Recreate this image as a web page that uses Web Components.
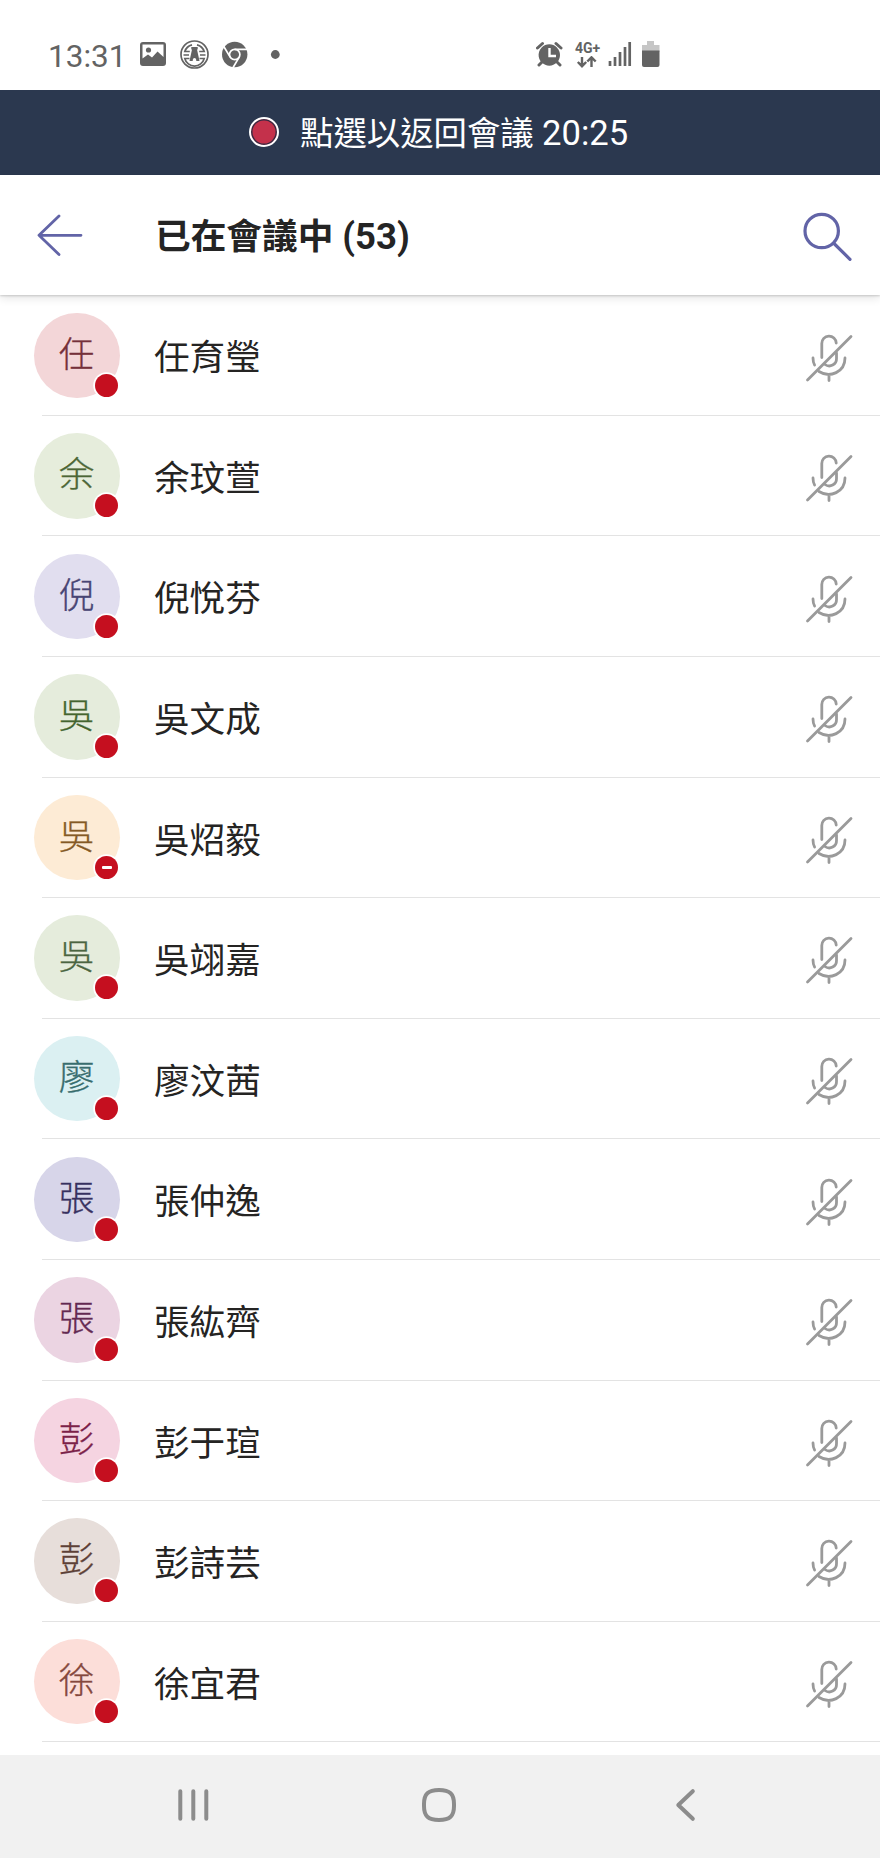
<!DOCTYPE html>
<html lang="zh-Hant">
<head>
<meta charset="utf-8">
<title>已在會議中</title>
<style>
html,body{margin:0;padding:0;background:#fff}
body{width:880px;font-family:Roboto,"Noto Sans CJK TC",sans-serif;color:#252423}
</style>
</head>
<body>
<meeting-screen></meeting-screen>
<script>
const define = (name, html, setup) => customElements.define(name, class extends HTMLElement {
  constructor() {
    super();
    this.attachShadow({ mode: 'open' }).innerHTML = html;
  }
  connectedCallback() { if (setup) setup(this, this.shadowRoot); }
});

define('status-bar', `
<style>
:host{display:flex;height:90px;box-sizing:border-box;padding:20px 0 0 48px;align-items:flex-start;color:#636363}
svg{display:block;flex:none}
.time{width:92px;font-size:31.500px;line-height:73px;height:69px;white-space:nowrap}
.net{width:29px;margin-left:12px;padding-top:20px}
.net span{display:block;font-size:14px;line-height:16px;height:16px;font-weight:700;white-space:nowrap}
</style>
<div class="time">13:31</div>
<svg width="27" height="69" viewBox="140 20 27 69"><path fill="#636363" fill-rule="evenodd" d="M143 42h20q3 0 3 3v18q0 3-3 3h-20q-3 0-3-3V45q0-3 3-3zm-.5 2.500v14l5.500-4 4 3 5.500-6 6 5.500V44.500z"/><circle cx="148.500" cy="50" r="2.600" fill="#636363"/></svg>
<svg width="55" height="69" viewBox="167 20 55 69"><g fill="none" stroke="#636363" stroke-width="1.700"><circle cx="194.500" cy="54.500" r="13.500"/><path d="M192 44.800a10 10 0 0 0-7.200 6.700h5M197 44.800a10 10 0 0 1 7.200 6.700h-5M183.500 55h5.500M205.500 55h-5.500M189.500 58.500h-4.700a10 10 0 0 0 19.400 0h-4.700"/></g><path fill="#636363" d="M191.300 47h6.400v2.500h-.7l2.500 11.500h-3.200q0-3-1.800-3t-1.800 3h-3.200l2.500-11.500h-.7z"/></svg>
<svg width="46" height="69" viewBox="222 20 46 69"><circle cx="234.700" cy="54.500" r="12.700" fill="#636363"/><g stroke="#fff" stroke-width="1.700" fill="none"><circle cx="234.700" cy="54.500" r="5.200"/><path d="M234.700 49.300H247M230.200 57.100L223.500 46M239.200 57.100L232.500 68.500"/></g></svg>
<svg width="268" height="69" viewBox="268 20 268 69"><circle cx="275.300" cy="54.500" r="4.400" fill="#636363"/></svg>
<svg width="27" height="69" viewBox="536 20 27 69"><circle cx="549.300" cy="55" r="10.700" fill="#636363"/><path d="M537.500 48l5-4.500M561 48l-5-4.500M543 61l-4 4M556 61l4 4" stroke="#636363" stroke-width="3" stroke-linecap="round"/><path d="M549.500 48v8h6.500" fill="none" stroke="#fff" stroke-width="2.400"/></svg>
<div class="net"><span>4G+</span><svg width="25" height="13" viewBox="575 55 25 13"><path d="M582 56v9M577.800 61l4.200 4.200 4.200-4.200M591.500 66v-9M587.300 60.500l4.200-4.200 4.200 4.200" fill="none" stroke="#636363" stroke-width="2.400"/></svg></div>
<svg width="38" height="69" viewBox="604 20 38 69"><path d="M610 61v5M615 57v9M620 52v14M625 47v19M629.700 42v24" stroke="#636363" stroke-width="2.700"/></svg>
<svg width="18" height="69" viewBox="642 20 18 69"><path fill="#c6c6c6" d="M647 41h7v4h5.500v7H642v-7h5z"/><path fill="#636363" d="M642 50.500h17.500V65q0 2-2 2H644q-2 0-2-2z"/></svg>
`);

define('call-banner', `
<style>
:host{display:flex;height:85px;background:#2b384f;color:#fff;align-items:center;justify-content:flex-start;padding:0 0 1px 249px;box-sizing:border-box}
i{display:block;box-sizing:border-box;width:30px;height:30px;border:2.500px solid #fff;border-radius:50%;background:#c4314b;margin-right:21px;box-shadow:inset 0 0 0 1.500px #3a2a42}
span{font-size:33.400px;line-height:50px;height:50px;white-space:nowrap;margin-top:2px}
::slotted(b){font-size:34.600px;font-weight:400}
</style><i></i><span><slot></slot></span>`);

define('title-bar', `
<style>
:host{display:flex;height:120px;align-items:center;box-sizing:border-box;background:#fff;box-shadow:0 1px 2px #0000002b,0 3px 9px #0000001c;position:relative;z-index:1}
svg{display:block;flex:none}
h1{margin:0;flex:1;font-size:35.700px;font-weight:700;line-height:54px;height:54px;padding-top:4px;color:#242424;white-space:nowrap}
::slotted(b){font-size:36.500px;font-weight:700}
</style>
<svg width="155" height="120" viewBox="0 175 155 120"><path d="M81 235.300H39M59 216L39 235.300 59 254.500" fill="none" stroke="#6264a7" stroke-width="2.800" stroke-linecap="round" stroke-linejoin="round"/></svg>
<h1><slot></slot></h1>
<svg width="80" height="120" viewBox="800 175 80 120"><g fill="none" stroke="#6264a7" stroke-width="3.200" stroke-linecap="round"><circle cx="821.700" cy="231" r="16.700"/><path d="M834 243.500l16 15.800"/></g></svg>`);

define('mic-off', `
<style>:host{display:block;width:75px;height:50px}svg{display:block}</style>
<svg width="75" height="50" viewBox="805 331 75 50"><g fill="none" stroke="#9a9a9a" stroke-width="2.800" stroke-linecap="round"><path d="M807.500 379L851 335.500"/><path d="M821.800 356.500V342.500a7.200 7.200 0 0 1 14.400-.5M836.500 352v5.500a7.200 7.200 0 0 1-11.500 6"/><path d="M813 357q0 4.500 1.600 7M845 357c0 14-15 20.500-26 13.500M829 374.500v5"/></g></svg>`);

define('presence-avatar', `
<style>
:host{display:block;position:relative;width:85.500px;height:85.500px;border-radius:50%;background:var(--bg);color:var(--fg)}
.c{font-weight:300;-webkit-text-stroke:.35px;font-size:35.600px;line-height:84px;text-align:center;margin-left:-1px}
.p{position:absolute;left:61px;top:61px;width:23px;height:23px;border-radius:50%;background:#c50f1f;box-shadow:0 0 0 1.800px #fff;display:flex;align-items:center;justify-content:center}
:host([dnd]) .p::after{content:"";width:10px;height:3px;border-radius:1px;background:#fff}
</style><div class="c"><slot></slot></div><div class="p"></div>`);

define('participant-row', `
<style>
:host{display:flex;height:120.580px;box-sizing:border-box;padding:17px 0 0 34.300px;align-items:flex-start;background:linear-gradient(#e3e3e3,#e3e3e3) right bottom/838px 1.200px no-repeat}
.n{flex:1;margin-left:34.200px;font-size:35.600px;line-height:52px;padding-top:19.800px;white-space:nowrap;color:#252423}
mic-off{margin-top:19px}
</style><presence-avatar></presence-avatar><div class="n"><slot></slot></div><mic-off></mic-off>`,
(el, root) => {
  const a = root.querySelector('presence-avatar');
  a.textContent = el.textContent.trim()[0];
  a.style.setProperty('--bg', el.getAttribute('bg'));
  a.style.setProperty('--fg', el.getAttribute('fg'));
  a.toggleAttribute('dnd', el.hasAttribute('dnd'));
});

define('nav-bar', `
<style>
:host{display:flex;height:103px;background:#f1f1f1;align-items:flex-start;justify-content:space-between;padding:32px 183px 0 176px;box-sizing:border-box}
svg{display:block}
g{fill:none;stroke:#8c8c8c;stroke-width:4;stroke-linecap:round;stroke-linejoin:round}
</style>
<svg width="34" height="36" viewBox="176 1787 34 36"><g><path d="M180.300 1791.200v27.600M193.300 1791.200v27.600M206.300 1791.200v27.600"/></g></svg>
<svg width="36" height="36" viewBox="421 1787 36 36" style="margin-left:-7.500px"><g><path d="M439 1790c11 0 15 4 15 14v2c0 10-4 14-15 14s-15-4-15-14v-2c0-10 4-14 15-14z"/></g></svg>
<svg width="22" height="36" viewBox="675 1787 22 36"><g><path d="M692.800 1791.200l-14.500 13.800 14.500 13.800"/></g></svg>`);

define('meeting-screen', `
<style>
:host{display:flex;flex-direction:column;width:880px;height:1858px;background:#fff;overflow:hidden}
main{height:1460px;box-sizing:border-box;padding-top:.5px}
</style>
<status-bar></status-bar>
<call-banner>點選以返回會議 <b>20:25</b></call-banner>
<title-bar>已在會議中 <b>(53)</b></title-bar>
<main>
<participant-row bg="#f3d6d8" fg="#75303a">任育瑩</participant-row>
<participant-row bg="#e6eddc" fg="#4c6636">余玟萱</participant-row>
<participant-row bg="#e1deef" fg="#484574">倪悅芬</participant-row>
<participant-row bg="#e5ecdc" fg="#44652f">吳文成</participant-row>
<participant-row bg="#fdebd5" fg="#855a25" dnd>吳炤毅</participant-row>
<participant-row bg="#e5ecdc" fg="#4b6541">吳翊嘉</participant-row>
<participant-row bg="#dbf0f2" fg="#386d6e">廖汶茜</participant-row>
<participant-row bg="#d7d5e9" fg="#37315f">張仲逸</participant-row>
<participant-row bg="#ebd4e2" fg="#632951">張紘齊</participant-row>
<participant-row bg="#f5d4e1" fg="#7b2148">彭于瑄</participant-row>
<participant-row bg="#e7deda" fg="#5d4036">彭詩芸</participant-row>
<participant-row bg="#fcded9" fg="#85483d">徐宜君</participant-row>
</main>
<nav-bar></nav-bar>`);
</script>
</body>
</html>
